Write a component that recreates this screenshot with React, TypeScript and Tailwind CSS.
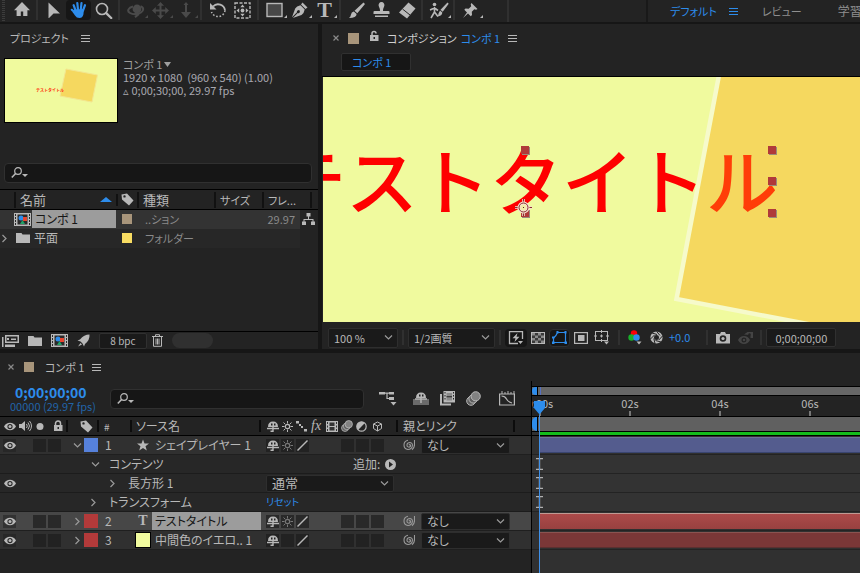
import { useState } from "react";
import type { ReactNode } from "react";
import clsx from "clsx";

type IconProps = { w?: number; h?: number; className?: string; children: ReactNode };

function Icon({ w = 16, h = 16, className, children }: IconProps) {
  return (
    <svg
      width={w}
      height={h}
      viewBox={`0 0 ${w} ${h}`}
      fill="currentColor"
      aria-hidden="true"
      className={clsx("shrink-0", className)}
    >
      {children}
    </svg>
  );
}

/* ---------- toolbar icons ---------- */

const HomeIcon = () => (
  <Icon>
    <path d="M8 1 0 9.2h2.6V15h4.2v-4.4h2.4V15h4.2V9.2H16Z" />
  </Icon>
);

const ArrowIcon = () => (
  <Icon>
    <path d="M2.5 0.5v16l5-5H14Z" />
  </Icon>
);

const HandIcon = () => (
  <Icon w={18} h={18}>
    <g fill="none" stroke="currentColor" strokeWidth="2.2" strokeLinecap="round">
      <path d="M5.6 9.5 3.6 4.2M8 8.5 7.3 2M10.8 8.5l.7-6.5M13 9.5l2-5.3M6.5 13 1.8 8.8" />
    </g>
    <path d="M4.5 8.5 14 8l-.6 5.5Q12.5 17 9.5 17 6.5 17 5 14.5L2.5 11Z" />
  </Icon>
);

const ZoomIcon = () => (
  <Icon w={18} h={17}>
    <circle cx="7" cy="7" r="5.5" fill="none" stroke="currentColor" strokeWidth="1.6" />
    <path d="m11.2 11.2 5 4.8" stroke="currentColor" strokeWidth="2.4" strokeLinecap="round" />
  </Icon>
);

const OrbitIcon = () => (
  <Icon w={18} h={17}>
    <circle cx="10" cy="7" r="4.4" />
    <path
      d="M6 4.5C1.5 5.5-.5 9 3 11c3 1.800 8 1.500 11-.5 3-2 3-5-.5-6.200M8 10.500l3 2.300-3 2.400"
      fill="none"
      stroke="currentColor"
      strokeWidth="2"
    />
  </Icon>
);

const PanIcon = () => (
  <Icon w={17} h={17}>
    <path d="M8.5 0 12 3.8H9.5v3.7h3.7V5L17 8.5 13.2 12V9.5H9.5v3.7H12L8.5 17 5 13.2h2.5V9.5H3.8V12L0 8.5 3.8 5v2.5h3.7V3.8H5Z" />
  </Icon>
);

const DollyIcon = () => (
  <Icon w={14} h={17}>
    <path d="M7 0 9.5 3H8v7h4L7 16 2 10h4V3H4.5Z" />
  </Icon>
);

const RotateIcon = () => (
  <Icon w={18} h={18}>
    <path d="M4 5.5A7 7 0 0 1 16 9.5" fill="none" stroke="currentColor" strokeWidth="1.8" />
    <path d="M16 9.5A7 7 0 0 1 2.5 11" fill="none" stroke="currentColor" strokeWidth="1.6" strokeDasharray="1.6 1.8" />
    <path d="M1 2v6.5h6.5Z" />
  </Icon>
);

const AnchorToolIcon = () => (
  <Icon w={17} h={17}>
    <rect x="1" y="1" width="15" height="15" fill="none" stroke="currentColor" strokeWidth="1.4" strokeDasharray="3 1.5" />
    <path d="m8.5 2.500 2.200 2.700H6.300ZM8.500 14.500l2.200-2.700H6.300ZM2.500 8.500l2.700-2.200v4.400ZM14.500 8.500l-2.700-2.200v4.400Z" />
    <circle cx="8.5" cy="8.5" r="1.9" />
  </Icon>
);

const RectToolIcon = () => (
  <Icon w={17} h={16}>
    <rect x="1" y="1.5" width="15" height="13" fill="#484848" stroke="currentColor" strokeWidth="1.4" />
  </Icon>
);

const PenIcon = () => (
  <Icon w={17} h={17}>
    <path d="m11.5.5 5 5-2 1.500-4.500-4.500Z" />
    <path d="M9.500 3.300 13.700 7.500Q13 11.500 10.500 13L1.800 16l5-5a1.500 1.500 0 1 0-.8-.8l-5 5L4.200 6.500Q5.500 4 9.500 3.300Z" />
  </Icon>
);

const BrushIcon = () => (
  <Icon w={17} h={17}>
    <path d="M15.500.5 17 2 9.300 11.300 6.500 8.800ZM5.800 9.500l2.800 2.500Q8.500 16 1 16q1.800-1.300 2-3.500.3-2.500 2.800-3Z" />
  </Icon>
);

const StampIcon = () => (
  <Icon w={17} h={17}>
    <path d="M8.500 0a3 3 0 0 1 2.700 4.200Q10 6.500 10 9h5.500q1 0 1 1v2H.5v-2q0-1 1-1H7q0-2.500-1.200-4.800A3 3 0 0 1 8.500 0ZM2 13.500h13V15H2Z" />
  </Icon>
);

const EraserIcon = () => (
  <Icon w={18} h={17}>
    <path d="m10.500.5 7 6-8.500 10-8-6Z" />
    <path d="m4.500 7 7.500 6" stroke="#232323" strokeWidth="1" />
  </Icon>
);

const RotoIcon = () => (
  <Icon w={20} h={17}>
    <circle cx="5.500" cy="2.500" r="1.800" />
    <path d="M5.500 5v5M1 8l4.500-2L9 8.500M5.500 10 2 16M5.500 10 9 14.500" fill="none" stroke="currentColor" strokeWidth="1.600" />
    <path d="m18.500.5 1.200 1.300-6 8-2.200-2ZM11 8.500l2.300 2q0 3.500-5 4 1.200-1.200 1.200-3Z" />
  </Icon>
);

const PinIcon = () => (
  <Icon w={17} h={17}>
    <path d="m9.500 1 6 6-1.500.8-1.700-.6-2.500 2.600.2 3.200-1.200 1.200L6 11.500 1 16l4-5.500L2.300 7.700l1.200-1.200 3.200.2 2.500-2.500L8.700 2.300Z" />
  </Icon>
);

/* ---------- small icons shared by panels ---------- */

const MenuIcon = () => (
  <Icon w={9} h={9}>
    <path d="M0 1h9v1H0ZM0 4h9v1H0ZM0 7h9v1H0Z" />
  </Icon>
);

const CloseIcon = () => (
  <Icon w={6} h={6} className="text-[#8a8a8a]">
    <path d="m.5.5 5 5m0-5-5 5" stroke="currentColor" strokeWidth="1.2" />
  </Icon>
);

const Chevron = ({ open = false }: { open?: boolean }) => (
  <Icon w={9} h={9} className="text-[#9a9a9a]">
    <path d={open ? "m1 2.5 3.5 3.5L8 2.5" : "M2.5 1 6 4.5 2.5 8"} fill="none" stroke="currentColor" strokeWidth="1.2" />
  </Icon>
);

const SearchIcon = () => (
  <Icon w={18} h={12}>
    <circle cx="7" cy="4" r="3.3" fill="none" stroke="currentColor" strokeWidth="1.2" />
    <path d="M4.6 6.5.8 10.5" stroke="currentColor" strokeWidth="1.6" />
    <path d="M11 7h6l-3 3Z" />
  </Icon>
);

const TagIcon = () => (
  <Icon w={13} h={13}>
    <path fillRule="evenodd" d="M.5 1.500 6 .5l6.500 7L8 12.500l-7-6ZM3.500 2.200a1.200 1.200 0 1 0 0 2.400 1.200 1.200 0 0 0 0-2.400Z" />
  </Icon>
);

const LockIcon = ({ open = false }: { open?: boolean }) => (
  <Icon w={10} h={12}>
    <path d={open ? "M3 6V3.500a2 2 0 0 1 4 0" : "M2.500 6V3.500a2.500 2.500 0 0 1 5 0V6"} fill="none" stroke="currentColor" strokeWidth="1.500" />
    <rect x="1" y="5" width="8.500" height="6" />
    <rect x="4.500" y="7" width="1.500" height="2" fill="#232323" />
  </Icon>
);

const EyeIcon = () => (
  <Icon w={12} h={9}>
    <path fillRule="evenodd" d="M6 .8Q10 .8 12 4.500 10 8.200 6 8.200T0 4.500Q2 .8 6 .8ZM6 2a2.600 2.600 0 1 0 0 5.200A2.600 2.600 0 0 0 6 2Z" />
    <circle cx="6" cy="4.500" r="1.500" />
  </Icon>
);

const SpeakerIcon = () => (
  <Icon w={13} h={12}>
    <path d="M0 4h2.500L6 1v10L2.500 8H0Z" />
    <path d="M7.500 4q1.500 2 0 4M9 2.500q3 3.500 0 7M10.500 1q4 5 0 10" fill="none" stroke="currentColor" />
  </Icon>
);

const FolderIcon = () => (
  <Icon w={14} h={12}>
    <path d="M0 1h5.500l1 1.500H14V11H0Z" />
  </Icon>
);

const CompIcon = () => (
  <Icon w={17} h={13}>
    <path d="M0 0h17v13H0Z" />
    <path d="M3.500 1.500h10v10h-10Z" fill="#2a2a2a" />
    <path d="M1 1h1v2H1ZM1 4h1v2H1ZM1 7h1v2H1ZM1 10h1v2H1ZM15 1h1v2h-1ZM15 4h1v2h-1ZM15 7h1v2h-1ZM15 10h1v2h-1Z" fill="#2a2a2a" />
    <circle cx="7" cy="5" r="2.500" fill="#2d8ceb" />
    <rect x="9" y="4" width="4" height="4" fill="#e8452f" />
    <path d="m8.500 7 2.500 4H6Z" fill="#21a366" />
  </Icon>
);

const FlowIcon = () => (
  <Icon w={13} h={12}>
    <path d="M4.500 0h4v3.500H7V6h4.500v2.500H13V12H9V8.500h1.500V7h-8v1.500H4V12H0V8.500h1.500V6H6V3.500H4.500Z" />
  </Icon>
);

const InterpretIcon = () => (
  <Icon w={17} h={13}>
    <path d="M3 1h14v8H3Z" />
    <path d="M4.500 2.500h11v5h-11Z" fill="#232323" />
    <path d="M9 4.500h5V6H9ZM0 3h1.500v10H0ZM3 10.500h10V13H3ZM5 4h2v2H5Z" />
  </Icon>
);

const RocketIcon = () => (
  <Icon w={13} h={13}>
    <path d="M12.500.5Q13 6 8 10l-1 2.500L5.500 9.500 3.500 7.500.5 6.500 3 5.500Q7 .5 12.500.5ZM3.500 9 5 10.500l-4 2Z" />
  </Icon>
);

const TrashIcon = () => (
  <Icon w={11} h={13}>
    <path d="M0 2.500h11M3.500 2V.7h4V2M1.500 3v9.300h8V3M4 4.500v6M5.500 4.500v6M7 4.500v6" fill="none" stroke="currentColor" />
  </Icon>
);

/* ---------- viewer bar icons ---------- */

const PreviewIcon = () => (
  <Icon w={16} h={14}>
    <path d="M10 12.500H1.500V.7h13V8" fill="none" stroke="currentColor" strokeWidth="1.300" />
    <path d="M9.500 2 4.500 7.200h3L6.500 11l5-5.200h-3ZM10 10h5l-2.500 3Z" />
  </Icon>
);

const GridIcon = () => (
  <Icon w={14} h={12}>
    <rect x=".5" y=".5" width="13" height="11" fill="#3a3a3a" stroke="currentColor" />
    <path
      d="M1 1h3v2.500H1ZM7 1h3v2.500H7ZM4 3.500h3V6H4ZM10 3.500h3V6h-3ZM1 6h3v2.500H1ZM7 6h3v2.500H7ZM4 8.500h3V11H4ZM10 8.500h3V11h-3Z"
      fill="#8a8a8a"
    />
  </Icon>
);

const MaskIcon = () => (
  <Icon w={15} h={13}>
    <path d="M1.500 11.500V7Q4 5.500 5.500 1.500h8v10Z" fill="none" stroke="currentColor" strokeWidth="1.200" />
    <path d="M4.500 0h2v2.500h-2ZM12.500 0h2v2.500h-2ZM0 5.500h2.500v2H0ZM0 10.500h2.500V13H0ZM12.500 10.500H15V13h-2.500Z" />
  </Icon>
);

const RegionIcon = () => (
  <Icon w={14} h={12}>
    <rect x=".6" y=".6" width="12.800" height="10.800" fill="none" stroke="currentColor" strokeWidth="1.200" />
    <rect x="4" y="3" width="6.500" height="6" />
  </Icon>
);

const GuidesIcon = () => (
  <Icon w={16} h={15}>
    <rect x="1.500" y="1.500" width="12" height="9" fill="none" stroke="currentColor" />
    <path d="M7.500 0v3M7.500 9v3M0 6h3M12 6h3M7.500 4.500v3M6 6h3" stroke="currentColor" />
    <path d="M10 11.500h5l-2.500 3Z" />
  </Icon>
);

const ChannelsIcon = () => (
  <Icon w={14} h={15}>
    <circle cx="6" cy="3.500" r="3.200" fill="#fb0007" />
    <circle cx="3.500" cy="7.500" r="3.200" fill="#17b02a" />
    <circle cx="8.500" cy="7.500" r="3.200" fill="#2d8ceb" />
    <path d="M8.500 11.500h5l-2.500 3Z" />
  </Icon>
);

const ApertureIcon = () => (
  <Icon w={13} h={13}>
    <circle cx="6.500" cy="6.500" r="4.300" fill="none" stroke="currentColor" strokeWidth="3.600" />
    <path d="M6.500.2 10 4.500M12.500 5 8.800 9M11 11 5.500 9.500M5 12.500 3.800 7.500M.5 8 4.500 4M2 2l5 1.500" stroke="#232323" strokeWidth="1" />
  </Icon>
);

const CameraIcon = () => (
  <Icon w={14} h={12}>
    <path fillRule="evenodd" d="M0 2h4l1-2h4l1 2h4v9.500H0ZM7 3.200a3.300 3.300 0 1 0 0 6.600 3.300 3.300 0 0 0 0-6.600Z" />
    <circle cx="7" cy="6.500" r="1.600" />
  </Icon>
);

const SnapshotIcon = () => (
  <Icon w={16} h={14} className="text-[#444]">
    <path fillRule="evenodd" d="M6 5q4 0 6 4-2 4-6 4T0 9q2-4 6-4Zm0 1.500a2.500 2.500 0 1 0 0 5 2.500 2.500 0 0 0 0-5Z" />
    <circle cx="6" cy="9" r="1.300" />
    <path d="M6 3.500 9.500 1H15v6h-2.500V4Z" />
    <circle cx="11.500" cy="3.500" r="1.200" fill="#232323" />
  </Icon>
);

/* ---------- timeline icons ---------- */

const MiniFlowIcon = () => (
  <Icon w={18} h={15}>
    <path d="M0 1h6v2.500H0ZM10 1h5v2.500h-5ZM10 6h5v3h-5Z" />
    <path d="M6 2.200h4M8 2.200v5.300h2" fill="none" stroke="currentColor" strokeWidth="1.200" />
    <path d="M11.500 11h6l-3 3.500Z" />
  </Icon>
);

const ShyIcon = () => (
  <Icon w={12} h={11}>
    <path fillRule="evenodd" d="M1 6Q1 .5 6 .5T11 6ZM4 2.500v2h1.500v-2ZM7 2.500v2h1.500v-2Z" />
    <path d="M0 7.500h12M6 6v5M3.500 10.300H6" stroke="currentColor" strokeWidth="1.400" />
  </Icon>
);

const ShyMasterIcon = () => (
  <Icon w={16} h={13}>
    <path d="M0 7h16v6H0Z" fill="#6a6a6a" />
    <path fillRule="evenodd" d="M3 6Q3 .5 8 .5T13 6ZM6 2.500v2h1.500v-2ZM9 2.500v2h1.500v-2Z" />
    <path d="M2 7h12M8 6v5" stroke="currentColor" strokeWidth="1.400" />
  </Icon>
);

const FramesIcon = () => (
  <Icon w={15} h={15}>
    <path d="M0 3h2v9.500h9V14.500H0Z" />
    <path d="M3.500 0H15v11.500H3.500Z" />
    <path d="M6.500 2H12v7.500H6.500Z" fill="#8a8a8a" />
    <path d="M4.500 1h1v1.500h-1ZM4.500 4h1v1.500h-1ZM4.500 7h1v1.500h-1ZM13 1h1v1.500h-1ZM13 4h1v1.500h-1ZM13 7h1v1.500h-1ZM6.500 5.200H12v1H6.500Z" fill="#232323" />
  </Icon>
);

const FilmIcon = () => (
  <Icon w={12} h={11}>
    <path d="M0 0h12v11H0Z" />
    <path d="M3.500 1.500h5v3.500h-5ZM3.500 6h5v3.500h-5ZM1 1h1v2H1ZM1 4.500h1v2H1ZM1 8h1v2H1ZM10 1h1v2h-1ZM10 4.500h1v2h-1ZM10 8h1v2h-1Z" fill="#333" />
  </Icon>
);

const BlurIcon = ({ small = false }: { small?: boolean }) => (
  <svg
    width={small ? 12 : 15}
    height={small ? 12 : 15}
    viewBox="0 0 15 15"
    fill="#5e5e5e"
    stroke="currentColor"
    strokeWidth="1"
    aria-hidden="true"
    className="shrink-0"
  >
    <circle cx="5" cy="10" r="4.300" />
    <circle cx="7.200" cy="7.800" r="4.300" />
    <circle cx="9.700" cy="5.300" r="4.600" fill="#828282" />
  </svg>
);

const GraphIcon = () => (
  <Icon w={16} h={15}>
    <path d="M.6 3h14.800v11H.6ZM2.500 5q3.500 0 5 3t5.500 4" fill="none" stroke="currentColor" strokeWidth="1.200" />
    <path d="M3 0v3M6 1v2M9 0v3M12 1v2M15 0v3" stroke="currentColor" />
  </Icon>
);

const SunIcon = () => (
  <Icon w={11} h={11}>
    <circle cx="5.500" cy="5.500" r="2.200" fill="none" stroke="currentColor" strokeWidth="1.200" />
    <path d="M5.500 0v2.500M5.500 8.500V11M0 5.500h2.500M8.500 5.500H11M1.500 1.500l1.800 1.800M7.700 7.700l1.800 1.800M9.500 1.500 7.700 3.300M3.300 7.700 1.500 9.500" stroke="currentColor" />
  </Icon>
);

const QualityIcon = () => (
  <Icon w={11} h={11}>
    <path d="M.5 10.500 10.500.5" stroke="currentColor" strokeWidth="1.400" />
  </Icon>
);

const DotsIcon = () => (
  <Icon w={12} h={11}>
    <path d="M0 0h3v2.500H0ZM3 3h2v2H3ZM5 5h2v2H5ZM8 8h3v2.500H8Z" />
  </Icon>
);

const AdjustIcon = () => (
  <Icon w={11} h={11}>
    <circle cx="5.500" cy="5.500" r="4.700" fill="none" stroke="currentColor" strokeWidth="1.200" />
    <path d="M8.900 2.100A4.800 4.800 0 0 0 2.100 8.900Z" />
  </Icon>
);

const CubeIcon = () => (
  <Icon w={11} h={11}>
    <path d="m5.500 1 4 2v4.500l-4 2.500-4-2.500V3ZM1.500 3l4 2 4-2M5.500 5v5" fill="none" stroke="currentColor" />
  </Icon>
);

const SpiralIcon = () => (
  <Icon w={12} h={12} className="text-[#9a9a9a]">
    <path
      d="M5.800 6.200Q7 5 7.500 6.200T6 8.200Q3.800 8 4 5.800T7 3.500Q10 4 9.300 7.200T5 10.500Q1 9.800 1 6T5 1.300M11.500 1v4.500Q11.500 9 9 10.800"
      fill="none"
      stroke="currentColor"
      strokeWidth="1.100"
    />
  </Icon>
);

const StarIcon = () => (
  <Icon w={12} h={12}>
    <path d="m6 .5 1.500 4H12L8.500 7.200 9.800 11.500 6 9l-3.800 2.500L3.500 7.200 0 4.500h4.500Z" />
  </Icon>
);

const PlayIcon = () => (
  <Icon w={11} h={11}>
    <circle cx="5.500" cy="5.500" r="5.500" />
    <path d="M4 2.500v6l4-3Z" fill="#232323" />
  </Icon>
);

/* ---------- building blocks ---------- */

type Tool = { name: string; icon: ReactNode; flyout?: boolean; disabled?: boolean };

const toolGroups: Tool[][] = [
  [
    { name: "選択", icon: <ArrowIcon /> },
    { name: "手のひら", icon: <HandIcon /> },
    { name: "ズーム", icon: <ZoomIcon /> },
  ],
  [
    { name: "周回", icon: <OrbitIcon />, flyout: true, disabled: true },
    { name: "パン", icon: <PanIcon />, flyout: true, disabled: true },
    { name: "ドリー", icon: <DollyIcon />, flyout: true, disabled: true },
  ],
  [
    { name: "回転", icon: <RotateIcon /> },
    { name: "アンカーポイント", icon: <AnchorToolIcon /> },
  ],
  [
    { name: "長方形", icon: <RectToolIcon />, flyout: true },
    { name: "ペン", icon: <PenIcon />, flyout: true },
    {
      name: "文字",
      icon: <span className="font-['Liberation_Serif'] text-[22px] leading-4 font-bold">T</span>,
      flyout: true,
    },
  ],
  [
    { name: "ブラシ", icon: <BrushIcon /> },
    { name: "コピースタンプ", icon: <StampIcon /> },
    { name: "消しゴム", icon: <EraserIcon /> },
  ],
  [{ name: "ロトブラシ", icon: <RotoIcon />, flyout: true }],
  [{ name: "パペットピン", icon: <PinIcon />, flyout: true }],
];

function ToolBar() {
  const [active, setActive] = useState("手のひら");
  return (
    <header className="flex h-[22px] overflow-hidden bg-[#232323]">
      <div className="mr-1 ml-0.5 w-[3px] bg-[repeating-linear-gradient(#3c3c3c_0_1px,transparent_1px_2px)]" />
      <button aria-label="ホーム" className="grid w-[25px] place-items-center pb-1">
        <HomeIcon />
      </button>
      {toolGroups.map((group, i) => (
        <div key={i} className="flex">
          <div className="mr-[3px] ml-0.5 h-5 w-0.5 bg-[#303030]" />
          {group.map((tool) => (
            <button
              key={tool.name}
              aria-label={tool.name}
              disabled={tool.disabled}
              onClick={() => setActive(tool.name)}
              className={clsx(
                "relative grid h-5 w-[25px] place-items-center rounded-sm",
                tool.disabled && "text-[#4a4a4a]",
                active === tool.name && "bg-[#161616] text-[#2d8ceb]"
              )}
            >
              {tool.icon}
              {tool.flyout && (
                <svg width="3" height="3" viewBox="0 0 3 3" fill="currentColor" className="absolute right-0 bottom-0.5">
                  <path d="M3 0v3H0Z" />
                </svg>
              )}
            </button>
          ))}
        </div>
      ))}
      <div className="ml-6 h-full w-0.5 bg-[#303030]" />
      <nav className="ml-auto flex w-[214px] shrink-0 items-center overflow-hidden border-l-2 border-[#191919] pl-[22px] text-[11px] whitespace-nowrap text-[#8f8f8f]">
        <button className="text-[#2d8ceb]">デフォルト</button>
        <button aria-label="ワークスペースメニュー" className="mr-6 ml-3 text-[#2d8ceb]">
          <MenuIcon />
        </button>
        <button>レビュー</button>
        <button className="ml-9 text-xs">学習</button>
      </nav>
    </header>
  );
}

function SearchBox({ label, className }: { label: string; className?: string }) {
  return (
    <label className={clsx("flex h-5 items-center rounded-sm border border-[#303030] bg-[#161616] pl-1.5", className)}>
      <SearchIcon />
      <input type="search" aria-label={label} className="h-4 min-w-0 flex-1 bg-transparent px-1 outline-none" />
    </label>
  );
}

function Dropdown({ label, options, className }: { label: string; options: string[]; className?: string }) {
  return (
    <div className={clsx("relative flex items-center rounded-xs border border-[#2e2e2e] bg-[#1a1a1a]", className)}>
      <select aria-label={label} className="h-4 w-full appearance-none bg-transparent pl-[5px] leading-4 outline-none">
        {options.map((o) => (
          <option key={o}>{o}</option>
        ))}
      </select>
      <span className="pointer-events-none absolute right-1">
        <Chevron open />
      </span>
    </div>
  );
}

/* ---------- project panel ---------- */

function ProjectPanel() {
  return (
    <section className="flex w-[318px] shrink-0 flex-col bg-[#232323]">
      <div className="flex h-7 items-center gap-3 pl-2.5 text-[11px]">
        <h2>プロジェクト</h2>
        <button aria-label="プロジェクトメニュー">
          <MenuIcon />
        </button>
      </div>

      <div className="flex gap-[5px] pt-[6px] pl-1">
        <div className="relative h-[65px] w-[114px] border border-black bg-[#f0fa9e]">
          <svg width="112" height="63" viewBox="0 0 112 63" aria-hidden="true">
            <path d="m61 10 31.500 6-5.500 27-32-6Z" fill="#f5d85f" stroke="#f3e690" />
          </svg>
          <span className="absolute top-7 left-[31px] text-[4px] leading-[6px] font-bold text-[#ff2a08] [font-feature-settings:normal]">
            テストタイトル
          </span>
        </div>
        <div className="text-[11px] leading-[13px] whitespace-pre text-[#9f9f9f]">
          <p className="flex items-center gap-0.5">
            コンポ 1
            <svg width="7" height="5" viewBox="0 0 7 5" fill="currentColor" aria-hidden="true">
              <path d="M0 0h7L3.500 5Z" />
            </svg>
          </p>
          <p className="text-[#a8a8b0]">1920 x 1080  (960 x 540) (1.00)</p>
          <p className="text-[#a8a8b0]">▵ 0;00;30;00, 29.97 fps</p>
        </div>
      </div>

      <SearchBox label="プロジェクトを検索" className="mt-10 mr-1.5 ml-1" />

      <table className="mt-1.5 w-full table-fixed border-collapse text-left leading-4">
        <colgroup>
          <col className="w-[14px]" />
          <col className="w-[102px]" />
          <col className="w-[21px]" />
          <col className="w-[77px]" />
          <col className="w-12" />
          <col className="w-[38px]" />
          <col />
        </colgroup>
        <thead>
          <tr className="h-5 border-y border-black text-[13px]">
            <th />
            <th className="font-normal">
              <div className="flex items-center justify-between border-l-2 border-[#111] pr-1 pl-1">
                名前
                <svg width="12" height="5" viewBox="0 0 12 5" fill="#2d8ceb" aria-hidden="true">
                  <path d="M6 0 12 5H0Z" />
                </svg>
              </div>
            </th>
            <th>
              <div className="flex h-3 items-center border-l-2 border-[#111] pl-[3px]">
                <TagIcon />
              </div>
            </th>
            <th className="font-normal">
              <div className="border-l-2 border-[#111] pl-1">種類</div>
            </th>
            <th className="text-[11px] font-normal">
              <div className="border-l-2 border-[#111] pl-1">サイズ</div>
            </th>
            <th colSpan={2} className="pr-1.5 text-[11px] font-normal">
              <div className="border-x-2 border-[#111] pl-1">フレ...</div>
            </th>
          </tr>
        </thead>
        <tbody>
          <tr className="h-[19px] bg-[#333] text-xs">
            <td />
            <td>
              <div className="flex items-center">
                <CompIcon />
                <span className="ml-px h-[18px] flex-1 bg-[#9c9c9c] pl-[3px] leading-[18px] text-[#161616]">コンポ 1</span>
              </div>
            </td>
            <td>
              <div className="ml-1.5 size-2.5 bg-[#a8957b]" />
            </td>
            <td className="pl-2 text-[11px] text-[#8a8a8a]">..ション</td>
            <td />
            <td className="pr-[5px] text-right text-[11px] text-[#8a8a8a]">29.97</td>
            <td className="bg-[#232323] pl-0.5">
              <FlowIcon />
            </td>
          </tr>
          <tr className="h-[19px] bg-[#272727] text-xs">
            <td>
              <Chevron />
            </td>
            <td>
              <div className="flex items-center gap-1 pl-0.5">
                <FolderIcon />
                平面
              </div>
            </td>
            <td>
              <div className="ml-1.5 size-2.5 bg-[#f8dc62]" />
            </td>
            <td className="pl-2 text-[11px] text-[#8a8a8a]">フォルダー</td>
            <td />
            <td />
            <td className="bg-[#232323]" />
          </tr>
        </tbody>
      </table>

      <div className="mt-auto flex h-[18px] items-center gap-[9px] border-t border-black pl-0.5">
        <button aria-label="フッテージを変換"><InterpretIcon /></button>
        <button aria-label="新規フォルダー"><FolderIcon /></button>
        <button aria-label="新規コンポジション"><CompIcon /></button>
        <button aria-label="プロジェクト設定"><RocketIcon /></button>
        <button className="h-4 w-12 rounded-xs border border-[#303030] bg-[#1a1a1a] text-[10px] leading-[14px]">8 bpc</button>
        <button aria-label="削除" className="-ml-1"><TrashIcon /></button>
        <div className="h-[15px] w-[41px] rounded-full bg-[#303030]" />
      </div>
    </section>
  );
}

/* ---------- composition viewer ---------- */

const Divider = () => <div className="h-[15px] w-0.5 shrink-0 bg-[#303030]" />;

const Handle = ({ className }: { className: string }) => (
  <div className={clsx("absolute size-2 bg-[#b03a3a] shadow-[1px_1px_0_#9a8a7a]", className)} />
);

function Viewer() {
  return (
    <section className="flex min-w-0 flex-1 flex-col bg-[#232323]">
      <div className="flex h-7 items-center pl-[11px] text-[11px]">
        <button aria-label="閉じる"><CloseIcon /></button>
        <div className="ml-[9px] size-[11px] bg-[#a8957b]" />
        <div className="ml-2.5 pb-1"><LockIcon open /></div>
        <h2 className="ml-2 text-[#d0d0d0]">コンポジション</h2>
        <span className="ml-1 text-[#2d8ceb]">コンポ 1</span>
        <button aria-label="コンポジションメニュー" className="ml-2"><MenuIcon /></button>
      </div>
      <div className="flex h-[25px] items-center border-b border-black pb-1 pl-[19px]">
        <button className="h-[18px] w-[70px] rounded-xs border border-[#303030] bg-[#161616] pl-2.5 text-left text-[11px] leading-4 text-[#2d8ceb]">
          コンポ 1
        </button>
      </div>

      {/* canvas with the shape layer, the title and its selection handles */}
      <div className="relative ml-px h-[245px] overflow-hidden bg-[#f0fa9e]">
        <svg width="1200" height="245" viewBox="0 0 1200 245" aria-hidden="true" className="absolute max-w-none">
          <path d="M398.500-15 353.500 222 700 288 1200 288V-15Z" fill="#f5d85f" stroke="#f6facb" strokeWidth="4.500" />
        </svg>
        <p className="absolute top-[61px] left-[-49px] text-[72px] leading-20 font-medium whitespace-nowrap text-[#fe0000] [font-feature-settings:normal]">
          テストタイト<span className="text-[#ff3d08]">ル</span>
        </p>
        <Handle className="top-[69px] left-[198px]" />
        <Handle className="top-[132px] left-[198px]" />
        <Handle className="top-[69px] left-[445px]" />
        <Handle className="top-[100px] left-[445px]" />
        <Handle className="top-[132px] left-[445px]" />
        <svg width="17" height="17" viewBox="0 0 17 17" aria-hidden="true" className="absolute top-[122px] left-[192px]">
          <path d="M8.500 0v17M0 8.500h17" stroke="#f7e0d0" strokeWidth="2.500" />
          <path d="M8.500 0v17M0 8.500h17" stroke="#8a3030" />
          <circle cx="8.500" cy="8.500" r="4.500" fill="#f2eda8" stroke="#f7e0d0" strokeWidth="3" />
          <circle cx="8.500" cy="8.500" r="4.500" fill="none" stroke="#8a3030" />
          <path d="M8 8h1v1H8Z" fill="#5a2020" />
        </svg>
      </div>

      <div className="flex h-[27px] items-center pt-1 pl-1.5 text-[11px]">
        <Dropdown label="拡大率" options={["100 %", "200 %", "50 %"]} className="h-5 w-[70px]" />
        <div className="ml-1"><Divider /></div>
        <Dropdown label="解像度" options={["1/2画質", "フル画質"]} className="ml-1 h-5 w-[87px]" />
        <div className="ml-1"><Divider /></div>
        <button aria-label="高速プレビュー" className="ml-1 grid h-[18px] w-[22px] place-items-center rounded-sm bg-[#161616]"><PreviewIcon /></button>
        <button aria-label="透明グリッド" className="ml-1"><GridIcon /></button>
        <button aria-label="マスク表示" className="ml-1 grid h-[18px] w-[21px] place-items-center rounded-sm border border-[#303030] bg-[#161616] text-[#2d8ceb]"><MaskIcon /></button>
        <button aria-label="目標範囲" className="ml-1"><RegionIcon /></button>
        <button aria-label="グリッドとガイド" className="ml-1.5"><GuidesIcon /></button>
        <div className="ml-2"><Divider /></div>
        <button aria-label="チャンネル" className="ml-2"><ChannelsIcon /></button>
        <button aria-label="露出をリセット" className="ml-2"><ApertureIcon /></button>
        <button className="ml-1.5 text-[#2d8ceb]">+0.0</button>
        <div className="ml-4"><Divider /></div>
        <button aria-label="スナップショット" className="ml-2"><CameraIcon /></button>
        <button aria-label="スナップショットを表示" className="ml-2"><SnapshotIcon /></button>
        <div className="ml-1.5"><Divider /></div>
        <button className="ml-1 h-[19px] w-[70px] shrink-0 rounded-xs border border-[#303030] bg-[#1a1a1a] leading-4">0;00;00;00</button>
      </div>
    </section>
  );
}

/* ---------- timeline ---------- */

const Box = ({ children }: { children?: ReactNode }) => (
  <button aria-label="スイッチ" className="mr-0.5 grid h-[13px] w-[13px] shrink-0 place-items-center bg-[#1d1d1d]/70">
    {children}
  </button>
);

type Layer = {
  id: number;
  name: string;
  icon: ReactNode;
  color: string;
  open?: boolean;
  selected?: boolean;
  collapse?: boolean;
};

function LayerRow({ layer }: { layer: Layer }) {
  return (
    <div className={clsx("flex h-[19px] items-center border-b border-[#1f1f1f]", layer.selected ? "bg-[#474747]" : "bg-[#303030]")}>
      <button aria-label="表示" className="ml-[3px] grid h-[13px] w-[13px] place-items-center bg-[#1d1d1d]/50">
        <EyeIcon />
      </button>
      <div className="flex w-[57px] pl-[17px]">
        <Box />
        <Box />
      </div>
      <button aria-label="展開" className="flex w-[11px]">
        <Chevron open={layer.open} />
      </button>
      <div className={clsx("h-[14px] w-[14px]", layer.color)} />
      <span className="w-9 pl-[7px] text-xs">{layer.id}</span>
      <span className="flex w-[18px] justify-center">{layer.icon}</span>
      <span
        className={clsx(
          "h-[18px] w-[109px] pl-[3px] text-xs leading-[18px] whitespace-nowrap",
          layer.selected && "bg-[#9c9c9c] text-[#161616]"
        )}
      >
        {layer.name}
      </span>
      <div className="flex w-[142px] pl-[5px]">
        <Box><ShyIcon /></Box>
        <Box>{layer.collapse && <span className="text-[#777]"><SunIcon /></span>}</Box>
        <Box><QualityIcon /></Box>
        <div className="w-[30px]" />
        <Box />
        <Box />
        <Box />
      </div>
      <button aria-label="ピックウイップ" className="mr-[6px]">
        <SpiralIcon />
      </button>
      <Dropdown label="親とリンク" options={["なし"]} className="h-[17px] w-[89px] text-xs" />
    </div>
  );
}

const layers: Layer[] = [
  { id: 1, name: "シェイプレイヤー 1", icon: <StarIcon />, color: "bg-[#5681db]", open: true, collapse: true },
  {
    id: 2,
    name: "テストタイトル",
    icon: <span className="font-['Liberation_Serif'] text-sm leading-4 font-bold">T</span>,
    color: "bg-[#b33a3a]",
    selected: true,
    collapse: true,
  },
  { id: 3, name: "中間色のイエロ.. 1", icon: <div className="size-4 border border-black bg-[#f0fa9e]" />, color: "bg-[#b33a3a]" },
];

function PropertyRow({ children }: { children: ReactNode }) {
  return <div className="flex h-[19px] items-center border-b border-[#1c1c1c] bg-[#272727] text-xs">{children}</div>;
}

const HeadSep = ({ className }: { className?: string }) => <div className={clsx("h-3 w-0.5 shrink-0 bg-[#0c0c0c]", className)} />;

function LayerList() {
  return (
    <div className="w-[532px] shrink-0 border-r border-black">
      <div className="flex h-[35px] items-center">
        <div className="w-[110px] pl-2.5 leading-[14px] whitespace-nowrap text-[#2d8ceb]">
          <p className="pl-[5px] text-sm leading-[14px] font-bold">0;00;00;00</p>
          <p className="text-[11px] text-[#2263a8]">00000 (29.97 fps)</p>
        </div>
        <SearchBox label="レイヤーを検索" className="w-[254px]" />
        <div className="flex flex-1 items-center pl-[15px]">
          <button aria-label="ミニフローチャート"><MiniFlowIcon /></button>
          <button aria-label="シャイレイヤー" className="ml-4"><ShyMasterIcon /></button>
          <button aria-label="フレームブレンド" className="ml-[11px]"><FramesIcon /></button>
          <button aria-label="モーションブラー" className="ml-[11px]"><BlurIcon /></button>
          <button aria-label="グラフエディター" className="ml-[18px]"><GraphIcon /></button>
        </div>
      </div>

      <div className="flex h-5 items-center border-y border-black text-[13px]">
        <div className="flex w-[66px] items-center gap-[3px] pl-1">
          <EyeIcon />
          <SpeakerIcon />
          <Icon w={11} h={9}><circle cx="5" cy="4.500" r="3.500" /></Icon>
          <div className="pl-1"><LockIcon /></div>
        </div>
        <HeadSep className="mr-3" />
        <TagIcon />
        <HeadSep className="mr-[5px] ml-1" />
        <span className="w-[26px] text-[10px]">#</span>
        <HeadSep className="mr-1" />
        <span className="w-[123px] text-xs">ソース名</span>
        <HeadSep className="mr-1" />
        <div className="flex w-[131px] items-center gap-[3px] pl-0.5">
          <ShyIcon />
          <SunIcon />
          <DotsIcon />
          <span className="w-3 font-['Liberation_Serif'] text-sm leading-4 italic">fx</span>
          <FilmIcon />
          <BlurIcon small />
          <AdjustIcon />
          <div className="pl-0.5"><CubeIcon /></div>
        </div>
        <HeadSep className="mr-[5px]" />
        <span className="w-[110px] text-xs">親とリンク</span>
        <HeadSep />
      </div>

      <LayerRow layer={layers[0]} />
      <PropertyRow>
        <button className="ml-[91px] flex w-[262px] items-center gap-[9px]">
          <Chevron open />
          コンテンツ
        </button>
        <button className="flex items-center gap-[5px]">
          追加:
          <PlayIcon />
        </button>
      </PropertyRow>
      <PropertyRow>
        <button aria-label="表示" className="ml-1"><EyeIcon /></button>
        <button className="ml-[92px] flex w-[158px] items-center gap-[11px]">
          <Chevron />
          長方形 1
        </button>
        <Dropdown label="描画モード" options={["通常", "乗算"]} className="h-[17px] w-[128px] text-[13px]" />
      </PropertyRow>
      <PropertyRow>
        <button className="ml-[89px] flex w-[177px] items-center gap-[11px]">
          <Chevron />
          トランスフォーム
        </button>
        <button className="text-[10px] text-[#2d8ceb]">リセット</button>
      </PropertyRow>
      <LayerRow layer={layers[1]} />
      <LayerRow layer={layers[2]} />
    </div>
  );
}

const KeyRow = () => (
  <div className="flex h-[19px] items-center border-b border-[#232323] bg-[#333] pl-1 text-[#b0b0b0]">
    <Icon w={7} h={12}>
      <path d="M0 0h7v1.200H4.200v9.600H7V12H0v-1.200h2.800V1.200H0Z" />
    </Icon>
  </div>
);

function TrackArea() {
  return (
    <div className="relative flex min-w-0 flex-1 flex-col overflow-hidden bg-[#303030]">
      <div className="h-[5px] bg-[#232323]" />
      <div className="flex h-2.5 border-y border-black bg-[#666]">
        <div className="w-[5px] rounded-l-full bg-[#2d8ceb]" />
        <div className="mr-0.5 w-px bg-black" />
        <div className="w-px bg-[#5570c0]" />
      </div>
      <div className="h-5 overflow-hidden bg-[#232323]">
        <div className="flex text-[11px] leading-[15px]">
          {["0:00s", "02s", "04s", "06s"].map((t) => (
            <div key={t} className="-ml-[37px] flex w-[90px] shrink-0 flex-col items-center not-first:ml-0">
              <span>{t}</span>
              <span className="h-[5px] w-0.5 bg-[#777]" />
            </div>
          ))}
        </div>
      </div>
      <div className="flex h-4 border-y border-black bg-[#606060]">
        <div className="w-[5px] rounded-l-full bg-[#2d8ceb]" />
        <div className="w-px bg-black" />
      </div>
      <div className="ml-[7px] h-[3px] bg-[#14bd1c]" />
      <div className="h-px bg-black" />
      <div className="h-[19px] border-b border-[#232323] pt-px pb-px pl-[7px]">
        <div className="h-full border-t border-b border-t-[#6f7096] border-b-[#3a4570] bg-[#545c8e]" />
      </div>
      <KeyRow />
      <KeyRow />
      <KeyRow />
      <div className="h-[19px] border-b border-[#232323] pt-px pb-px pl-[7px]">
        <div className="h-full border-t border-[#c09a92] bg-linear-to-b from-[#ac4a49] to-[#984140]" />
      </div>
      <div className="h-[19px] border-b border-[#232323] pt-px pb-px pl-[7px]">
        <div className="h-full border-y border-t-[#8a5350] border-b-[#5a3030] bg-[#7a3737]" />
      </div>

      {/* playhead */}
      <div className="absolute top-5 bottom-0 left-px flex flex-col items-center">
        <svg width="13" height="14" viewBox="0 0 13 14" aria-hidden="true">
          <path d="M1 0h11v7l-5.500 6.500L1 7Z" fill="#2d8ceb" />
        </svg>
        <div className="w-px flex-1 bg-[#3f8fe6]" />
      </div>
    </div>
  );
}

function Timeline() {
  return (
    <section className="flex flex-1 flex-col bg-[#232323]">
      <div className="flex h-7 items-center pl-2 text-[11px]">
        <button aria-label="閉じる"><CloseIcon /></button>
        <div className="ml-2.5 size-2.5 bg-[#a8957b]" />
        <h2 className="ml-[11px]">コンポ 1</h2>
        <button aria-label="タイムラインメニュー" className="ml-2"><MenuIcon /></button>
      </div>
      <div className="flex flex-1">
        <LayerList />
        <TrackArea />
      </div>
    </section>
  );
}

export default function App() {
  return (
    <main className="flex min-h-screen flex-col overflow-hidden bg-[#161616] font-['Noto_Sans_CJK_JP',sans-serif] text-[#b8b8b8] [font-feature-settings:'palt']">
      <ToolBar />
      <div className="mt-0.5 mb-1 flex gap-1">
        <ProjectPanel />
        <Viewer />
      </div>
      <Timeline />
    </main>
  );
}
